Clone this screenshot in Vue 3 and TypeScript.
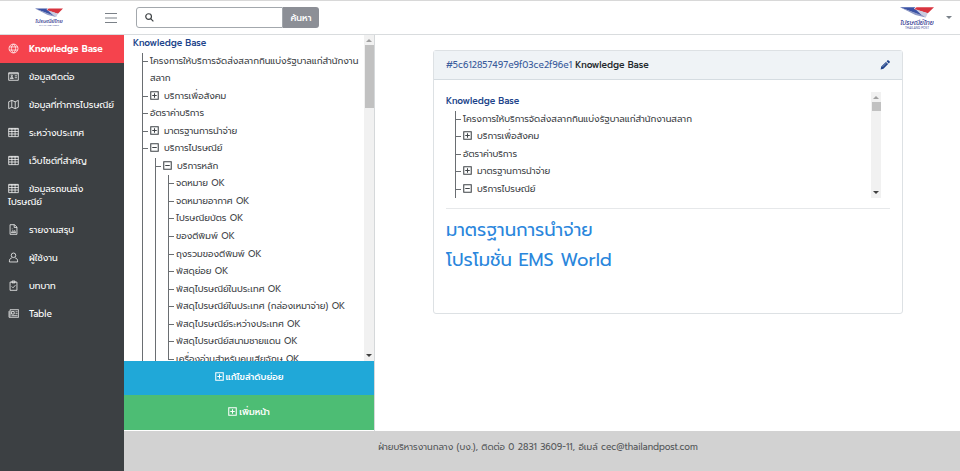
<script setup lang="ts">
import { ref } from 'vue'

interface TreeNode {
  label: string
  toggle?: 'plus' | 'minus'
  children?: TreeNode[]
}

interface MenuItem {
  label: string
  icon: string
}

const menu: MenuItem[] = [
  { label: 'Knowledge Base', icon: 'globe' },
  { label: 'ข้อมูลติดต่อ', icon: 'card' },
  { label: 'ข้อมูลที่ทำการไปรษณีย์', icon: 'map' },
  { label: 'ระหว่างประเทศ', icon: 'table' },
  { label: 'เว็บไซต์ที่สำคัญ', icon: 'table' },
  { label: 'ข้อมูลรถขนส่งไปรษณีย์', icon: 'table' },
  { label: 'รายงานสรุป', icon: 'file' },
  { label: 'ผู้ใช้งาน', icon: 'user' },
  { label: 'บทบาท', icon: 'clipboard' },
  { label: 'Table', icon: 'news' },
]

const icons: Record<string, string> = {
  globe: 'M8 1.5a6.5 6.5 0 1 0 0 13a6.5 6.5 0 1 0 0-13zM8 1.5c-4 3.6-4 9.4 0 13M8 1.5c4 3.6 4 9.4 0 13M2 5.7h12M2 10.3h12',
  card: 'M1 2.5h14v11H1zM1 4h14M3.4 11c0-2.6 4.2-2.6 4.2 0zM5.5 6a1.1 1.1 0 1 0 0 2.2a1.1 1.1 0 1 0 0-2.2zM9.8 7h3.4M9.8 9.8h3.4',
  map: 'M1 4l4.5-2l5 2L15 2v10l-4.5 2l-5-2L1 14zM5.5 2v10M10.5 4v10',
  table: 'M1 2h14v12H1zM1 3h14M1 6.6h14M1 10.2h14M5.7 2v12M10.3 2v12',
  file: 'M3 1h6.5L13 4.5V15H3zM9 1v4h4M5 12.5l2-3l1.5 1.5l1.2-1.5l1.3 3zM5.6 7h1',
  user: 'M8 1.5a3.2 3.2 0 1 0 0 6.6a3.2 3.2 0 1 0 0-6.6zM5.6 8.6C3 9 2 10.6 2 14.5h12c0-3.9-1-5.5-3.6-5.9',
  clipboard: 'M3 3h10v12H3zM5.8 1.5h4.4v2.7H5.8zM5.3 9.3l2 2l3.5-3.8',
  news: 'M3 2.5h12.5v11H1.5V4.5M3 2.5v10M5 5.2h4v3.6H5zM11 5.5h3M11 8.3h3M5 11.2h9',
}

const postalItems: TreeNode[] = [
  'จดหมาย OK',
  'จดหมายอากาศ OK',
  'ไปรษณียบัตร OK',
  'ของตีพิมพ์ OK',
  'ถุงรวมของตีพิมพ์ OK',
  'พัสดุย่อย OK',
  'พัสดุไปรษณีย์ในประเทศ OK',
  'พัสดุไปรษณีย์ในประเทศ (กล่องเหมาจ่าย) OK',
  'พัสดุไปรษณีย์ระหว่างประเทศ OK',
  'พัสดุไปรษณีย์สนามชายแดน OK',
  'เครื่องอ่านสำหรับคนเสียจักษุ OK',
].map((label) => ({ label }))

const tree: TreeNode[] = [
  { label: 'โครงการให้บริการจัดส่งสลากกินแบ่งรัฐบาลแก่สำนักงานสลาก' },
  { label: 'บริการเพื่อสังคม', toggle: 'plus' },
  { label: 'อัตราค่าบริการ' },
  { label: 'มาตรฐานการนำจ่าย', toggle: 'plus' },
  {
    label: 'บริการไปรษณีย์',
    toggle: 'minus',
    children: [{ label: 'บริการหลัก', toggle: 'minus', children: postalItems }, { label: 'บริการเสริม' }],
  },
  { label: 'บริการการเงิน' },
]

const togglePath = {
  plus: 'M1 1h10v10H1zM3 6h6M6 3v6',
  minus: 'M1 1h10v10H1zM3 6h6',
}

const active = ref(0)
const query = ref('')
</script>

<template>
  <div class="app">
    <svg class="defs" width="0" height="0" aria-hidden="true">
      <symbol id="brand" viewBox="0 0 66 44">
        <path d="M0 1H30L27 4L50 14L46 19Z" fill="#3a52a4" />
        <path d="M32 1H66L54 13L28 5Z" fill="#d8343f" />
        <path d="M30 5L54 13L50 21L44 18Z" fill="#c9cde0" />
        <path d="M0 1L44 17L50 21L30 16Z" fill="#8d98c4" />
        <text x="33" y="35" text-anchor="middle" class="brand-name">ไปรษณีย์ไทย</text>
        <text x="33" y="43" text-anchor="middle" class="brand-sub">THAILAND POST</text>
      </symbol>
    </svg>

    <header class="topbar">
      <a class="brand" href="#" aria-label="ไปรษณีย์ไทย"><svg class="logo"><use href="#brand" /></svg></a>
      <button class="burger" type="button" aria-label="เมนู">
        <svg viewBox="0 0 12 12"><path d="M0 1.5h12M0 6h12M0 10.5h12" /></svg>
      </button>
      <form class="search" @submit.prevent>
        <label class="field">
          <svg viewBox="0 0 12 12"><circle cx="4.8" cy="4.8" r="3.8" /><path d="M7.5 7.5L11.2 11.2" /></svg>
          <input v-model="query" type="text" aria-label="ค้นหา" />
        </label>
        <button class="go" type="submit">ค้นหา</button>
      </form>
      <button class="account" type="button" aria-label="บัญชีผู้ใช้">
        <svg class="avatar"><use href="#brand" /></svg>
        <span class="caret"></span>
      </button>
    </header>

    <div class="body">
      <nav class="sidebar">
        <a
          v-for="(item, i) in menu"
          :key="item.label"
          href="#"
          class="item"
          :class="{ active: i === active }"
          @click.prevent="active = i"
        >
          <svg viewBox="0 0 16 16"><path :d="icons[item.icon]" /></svg>{{ item.label }}
        </a>
      </nav>

      <div class="page">
        <div class="content">
          <section class="explorer">
            <div class="scroller">
              <div class="tree">
                <a class="root" href="#">Knowledge Base</a>
                <ul>
                  <li v-for="a in tree" :key="a.label">
                    <svg v-if="a.toggle" class="toggle" viewBox="0 0 12 12"><path :d="togglePath[a.toggle]" /></svg>{{ a.label }}
                    <ul v-if="a.children">
                      <li v-for="b in a.children" :key="b.label">
                        <svg v-if="b.toggle" class="toggle" viewBox="0 0 12 12"><path :d="togglePath[b.toggle]" /></svg>{{ b.label }}
                        <ul v-if="b.children">
                          <li v-for="c in b.children" :key="c.label">{{ c.label }}</li>
                        </ul>
                      </li>
                    </ul>
                  </li>
                </ul>
              </div>
              <div class="bar"><i class="up"></i><i class="thumb long"></i><i class="down"></i></div>
            </div>
            <button class="wide blue" type="button">
              <svg class="toggle" viewBox="0 0 12 12"><path :d="togglePath.plus" /></svg>แก้ไขลำดับย่อย
            </button>
            <button class="wide green" type="button">
              <svg class="toggle" viewBox="0 0 12 12"><path :d="togglePath.plus" /></svg>เพิ่มหน้า
            </button>
          </section>

          <main class="detail">
            <article class="card">
              <header class="card-head">
                <p><a href="#">#5c612857497e9f03ce2f96e1</a> <strong>Knowledge Base</strong></p>
                <button type="button" class="edit" aria-label="แก้ไข">
                  <svg viewBox="0 0 16 16">
                    <path d="M1 15l1-4.5L9.5 3L13 6.5L5.5 14zM10.5 2L12 .5q1-.7 2 .3l1.2 1.2q1 1 .3 2L14 5.5z" />
                    <path class="shine" d="M4 11L10 5" />
                  </svg>
                </button>
              </header>
              <div class="card-body">
                <div class="scroller preview">
                  <div class="tree">
                    <a class="root" href="#">Knowledge Base</a>
                    <ul>
                      <li v-for="a in tree" :key="a.label">
                        <svg v-if="a.toggle" class="toggle" viewBox="0 0 12 12"><path :d="togglePath[a.toggle]" /></svg>{{ a.label }}
                        <ul v-if="a.children">
                          <li v-for="b in a.children" :key="b.label">{{ b.label }}</li>
                        </ul>
                      </li>
                    </ul>
                  </div>
                  <div class="bar"><i class="up"></i><i class="thumb"></i><i class="down"></i></div>
                </div>
                <hr />
                <h2><a href="#">มาตรฐานการนำจ่าย</a></h2>
                <h2><a href="#">โปรโมชั่น EMS World</a></h2>
              </div>
            </article>
          </main>
        </div>
        <footer class="footer">ฝ่ายบริหารงานกลาง (บง.), ติดต่อ 0 2831 3609-11, อีเมล์ cec@thailandpost.com</footer>
      </div>
    </div>
  </div>
</template>

<style>
body {
  margin: 0;
}
</style>

<style scoped>
.app {
  display: flex;
  flex-direction: column;
  height: 100vh;
  font-family: Prompt, Kanit, 'Noto Sans Thai', 'Noto Sans', sans-serif;
  font-size: 9px;
  color: #3e4347;
  background: #fff;
}
.app * {
  box-sizing: border-box;
}
.defs {
  display: block;
  width: 0;
  height: 0;
}
a {
  color: inherit;
  text-decoration: none;
}
button {
  border: 0;
  padding: 0;
  font: inherit;
  color: inherit;
  background: none;
  cursor: pointer;
}
svg {
  fill: none;
  stroke: currentColor;
}
.topbar {
  display: flex;
  align-items: center;
  flex: none;
  height: 35px;
  border-top: 1px solid #d8d8d8;
  border-bottom: 1px solid #d9dcde;
}
.brand {
  width: 97px;
  text-align: center;
}
.logo {
  display: block;
  width: 28px;
  height: 19px;
  margin: 0 auto;
  stroke: none;
}
.avatar {
  width: 34px;
  height: 24px;
  stroke: none;
}
.brand-name {
  font-size: 12px;
  font-weight: 500;
  font-style: italic;
  fill: #4a4f9c;
}
.brand-sub {
  font-size: 6px;
  fill: #5a5fa4;
}
.burger {
  width: 28px;
  height: 20px;
}
.burger svg {
  display: block;
  width: 12px;
  height: 12px;
  margin: 0 auto;
  stroke: #7b8188;
}
.search {
  display: flex;
  width: 183px;
  height: 21px;
  margin-left: 11px;
}
.field {
  display: flex;
  align-items: center;
  flex: 1;
  min-width: 0;
  padding-left: 8px;
  border: 1px solid #a3a8ad;
  border-radius: 3px 0 0 3px;
}
.field svg {
  flex: none;
  width: 9px;
  height: 9px;
  stroke: #3c4043;
  stroke-width: 1.6;
}
.field input {
  flex: 1;
  min-width: 0;
  border: 0;
  outline: 0;
  font: inherit;
  background: none;
}
.go {
  width: 36px;
  border-radius: 0 3px 3px 0;
  color: #fff;
  font-weight: 500;
  background: #8c8f96;
}
.account {
  display: flex;
  align-items: center;
  gap: 12px;
  margin-left: auto;
  padding-right: 8px;
}
.caret {
  border: 3px solid transparent;
  border-top-color: #7a828a;
  border-bottom: 0;
}
.body {
  display: flex;
  flex: 1;
  min-height: 0;
}
.sidebar {
  flex: none;
  width: 124px;
  color: #fff;
  background: #3c4043;
}
.item {
  display: block;
  padding: 8px 8px 7px;
  line-height: 13px;
}
.item.active {
  font-weight: 600;
  background: #f5434d;
}
.item svg {
  width: 11px;
  height: 11px;
  margin-right: 10px;
  vertical-align: -2px;
  stroke-width: 1.1;
}
.page {
  display: flex;
  flex-direction: column;
  flex: 1;
  min-width: 0;
}
.content {
  display: flex;
  flex: 1;
  min-height: 0;
}
.explorer {
  display: flex;
  flex-direction: column;
  flex: none;
  width: 251px;
  padding-bottom: 1px;
  border-right: 1px solid #d5d8da;
}
.scroller {
  display: flex;
  flex: 1;
  min-height: 0;
  overflow: hidden;
}
.tree {
  flex: 1;
  min-width: 0;
  padding-left: 9px;
  line-height: 1.95;
  overflow: hidden;
}
.root {
  display: block;
  color: #20438a;
  font-weight: 500;
}
.tree ul {
  margin: 0;
  padding: 0 0 0 9px;
  list-style: none;
}
.tree li {
  padding-left: 8px;
  background:
    linear-gradient(#6a6e72, #6a6e72) 0 0 / 1px 100% no-repeat,
    linear-gradient(#6a6e72, #6a6e72) 0 8px / 6px 1px no-repeat;
}
.tree li:last-child {
  background-size: 1px 9px, 6px 1px;
}
.tree li ul {
  padding-left: 5px;
}
.toggle {
  width: 9px;
  height: 9px;
  margin-right: 5px;
  vertical-align: -1px;
  stroke-width: 1.4;
}
.bar {
  display: flex;
  flex-direction: column;
  align-items: center;
  flex: none;
  width: 10px;
  padding: 4px 0;
  background: #f1f1f1;
}
.up,
.down {
  border: 3px solid transparent;
}
.up {
  border-top: 0;
  border-bottom-color: #a0a0a0;
}
.down {
  margin-top: auto;
  border-bottom: 0;
  border-top-color: #404040;
}
.thumb {
  width: 9px;
  height: 9px;
  margin-top: 3px;
  background: #c1c1c1;
}
.thumb.long {
  height: 63px;
}
.wide {
  flex: none;
  height: 35px;
  padding-bottom: 2px;
  color: #fff;
  font-weight: 500;
}
.wide .toggle {
  margin-right: 2px;
}
.blue {
  height: 34px;
  background: #20a8d8;
}
.green {
  background: #4dbd74;
}
.detail {
  flex: 1;
  min-width: 0;
  padding: 15px 57px 0 58px;
}
.card {
  border: 1px solid #dde1e4;
  border-radius: 3px;
}
.card-head {
  display: flex;
  align-items: center;
  justify-content: space-between;
  height: 29px;
  padding: 0 12px;
  border-bottom: 1px solid #d5dce1;
  background: #eff3f6;
}
.card-head p {
  margin: 0;
}
.card-head a {
  color: #3a5c9c;
}
.card-head strong {
  font-weight: 500;
  color: #23282c;
}
.edit svg {
  display: block;
  width: 10px;
  height: 10px;
  fill: #20438a;
  stroke: none;
}
.edit .shine {
  stroke: #b8c6de;
  stroke-width: 1;
}
.card-body {
  padding: 12px 12px 38px;
}
.preview {
  height: 106px;
  padding-right: 9px;
}
.preview .tree {
  padding: 1px 0 0;
}
hr {
  margin: 10px 0 6px;
  border: 0;
  border-top: 1px solid #e6e8ea;
}
h2 {
  margin: 0;
  font-size: 18px;
  line-height: 30px;
  font-weight: 400;
  color: #2a86dc;
}
.footer {
  flex: none;
  height: 40px;
  padding: 9px 8px 0 0;
  line-height: 15px;
  text-align: center;
  color: #55585a;
  background: #d2d2d2;
}
</style>
